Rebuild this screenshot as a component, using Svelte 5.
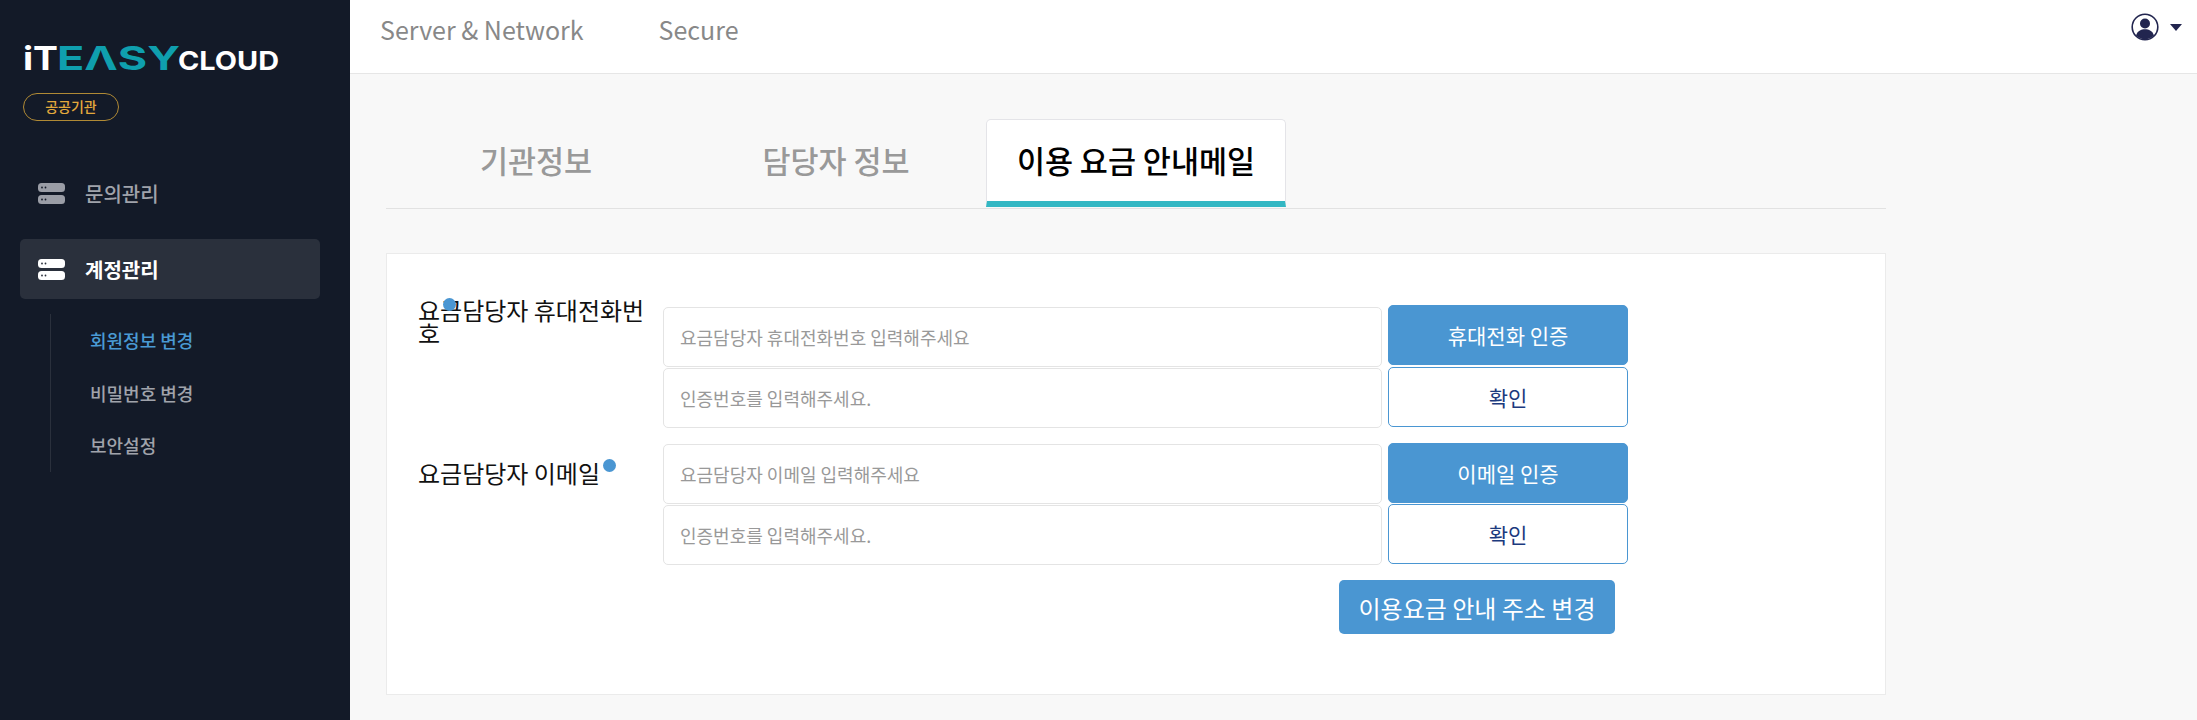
<script>
  const subMenu = [
    { label: "회원정보 변경", active: true },
    { label: "비밀번호 변경", active: false },
    { label: "보안설정", active: false },
  ];
  const tabs = [
    { label: "기관정보", active: false },
    { label: "담당자 정보", active: false },
    { label: "이용 요금 안내메일", active: true },
  ];
</script>

{#snippet serverIcon(fill, dot)}
  <svg class="menu-icon" width="27" height="21" viewBox="0 0 27 21">
    <rect x="0" y="0" width="27" height="9" rx="3.5" fill={fill} />
    <rect x="0" y="12" width="27" height="9" rx="3.5" fill={fill} />
    <circle cx="4" cy="4.5" r="0.9" fill={dot} />
    <circle cx="7.5" cy="4.5" r="0.9" fill={dot} />
    <circle cx="4" cy="16.5" r="0.9" fill={dot} />
    <circle cx="7.5" cy="16.5" r="0.9" fill={dot} />
  </svg>
{/snippet}

<div class="layout">
  <aside class="sidebar">
    <svg class="logo" width="258" height="42" viewBox="0 0 258 42">
      <text class="logo-big" x="0" y="33" fill="#fff" textLength="35" lengthAdjust="spacingAndGlyphs">iT</text>
      <text class="logo-big" x="34" y="33" fill="#0f9fae" textLength="123" lengthAdjust="spacingAndGlyphs">EΛSY</text>
      <text class="logo-small" x="155" y="33" fill="#fff" textLength="101" lengthAdjust="spacingAndGlyphs">CLOUD</text>
    </svg>
    <div class="badge">공공기관</div>

    <nav class="menu">
      <a class="menu-item" href="#inquiry">
        {@render serverIcon("#9a9da6", "#131a28")}
        <span>문의관리</span>
      </a>
      <a class="menu-item current" href="#account">
        {@render serverIcon("#ffffff", "#2a303c")}
        <span>계정관리</span>
      </a>
      <div class="submenu">
        {#each subMenu as item}
          <a class="sub-link" class:active={item.active} href="#sub">{item.label}</a>
        {/each}
      </div>
    </nav>
  </aside>

  <div class="content">
    <header class="topbar">
      <a class="top-link" href="#server">Server &amp; Network</a>
      <a class="top-link" href="#secure">Secure</a>
      <div class="user">
        <svg width="28" height="28" viewBox="0 0 28 28">
          <circle cx="14" cy="14" r="12.8" fill="#fff" stroke="#22254f" stroke-width="1.6" />
          <circle cx="14" cy="10.5" r="5" fill="#22254f" />
          <path d="M5 22.5c1.5-4.5 5-6.2 9-6.2s7.5 1.7 9 6.2a12.8 12.8 0 0 1-18 0z" fill="#22254f" />
        </svg>
        <span class="caret"></span>
      </div>
    </header>

    <main class="main">
      <div class="tabs">
        {#each tabs as tab}
          <button class="tab" class:active={tab.active}>{tab.label}</button>
        {/each}
      </div>

      <section class="card">
        <div class="row phone">
          <div class="label-col"><label class="label" for="phone">요금담당자 휴대전화번호</label></div>
          <div class="fields">
            <div class="line">
              <input id="phone" placeholder="요금담당자 휴대전화번호 입력해주세요" />
              <button class="btn solid">휴대전화 인증</button>
            </div>
            <div class="line">
              <input placeholder="인증번호를 입력해주세요." />
              <button class="btn outline">확인</button>
            </div>
          </div>
        </div>

        <div class="row email">
          <div class="label-col"><label class="label" for="email">요금담당자 이메일</label></div>
          <div class="fields">
            <div class="line">
              <input id="email" placeholder="요금담당자 이메일 입력해주세요" />
              <button class="btn solid">이메일 인증</button>
            </div>
            <div class="line">
              <input placeholder="인증번호를 입력해주세요." />
              <button class="btn outline">확인</button>
            </div>
          </div>
        </div>

        <div class="actions">
          <button class="btn-change">이용요금 안내 주소 변경</button>
        </div>
      </section>
    </main>
  </div>
</div>

<style>
  :global(body) {
    background: #f8f8f8;
    font-family: "Noto Sans CJK KR", "Noto Sans", sans-serif;
  }

  a {
    text-decoration: none;
  }

  button,
  input {
    font-family: inherit;
  }

  .layout {
    display: flex;
    min-height: 720px;
  }

  .sidebar {
    box-sizing: border-box;
    flex: 0 0 350px;
    background: #131a28;
    padding: 37px 30px 0 23px;
  }

  .logo {
    display: block;
  }

  .logo-big {
    font-family: Inter, sans-serif;
    font-size: 33px;
    font-weight: 700;
  }

  .logo-small {
    font-family: Inter, sans-serif;
    font-size: 26px;
    font-weight: 700;
  }

  .badge {
    box-sizing: border-box;
    width: 96px;
    height: 28px;
    margin-top: 14px;
    border: 1px solid #b08a35;
    border-radius: 14px;
    color: #e3a93c;
    font-size: 14px;
    font-weight: 500;
    line-height: 25px;
    text-align: center;
  }

  .menu {
    margin: 42px 0 0 -3px;
  }

  .menu-item {
    display: flex;
    align-items: center;
    gap: 20px;
    height: 60px;
    padding-left: 18px;
    border-radius: 5px;
    color: #a0a3ab;
    font-size: 20px;
    font-weight: 500;
  }

  .menu-item.current {
    margin-top: 16px;
    background: #2a303c;
    color: #fff;
    font-weight: 700;
  }

  .submenu {
    display: flex;
    flex-direction: column;
    gap: 24.5px;
    margin: 15px 0 0 30px;
    padding: 12px 0 13px 39px;
    border-left: 1px solid #2a303c;
  }

  .sub-link {
    color: #a0a3ab;
    font-size: 18px;
    font-weight: 500;
    line-height: 28px;
  }

  .sub-link.active {
    color: #4a9ad4;
  }

  .content {
    flex: 1;
    min-width: 0;
  }

  .topbar {
    box-sizing: border-box;
    display: flex;
    align-items: flex-start;
    gap: 75px;
    height: 74px;
    padding: 11px 0 0 30px;
    background: #fff;
    border-bottom: 1px solid #e6e6e6;
  }

  .top-link {
    color: #888;
    font-size: 25px;
    line-height: 36px;
  }

  .user {
    display: flex;
    align-items: center;
    gap: 11px;
    margin-left: auto;
    margin-right: 15px;
    margin-top: 2px;
  }

  .caret {
    width: 0;
    height: 0;
    border-left: 6px solid transparent;
    border-right: 6px solid transparent;
    border-top: 7px solid #22254f;
  }

  .main {
    box-sizing: border-box;
    width: 1536px;
    padding: 45px 0 0 36px;
  }

  .tabs {
    display: flex;
    height: 89px;
    border-bottom: 1px solid #e2e2e2;
  }

  .tab {
    box-sizing: border-box;
    width: 300px;
    height: 88px;
    padding: 0 0 8px;
    background: none;
    border: 1px solid transparent;
    border-bottom: 0;
    color: #999;
    font-size: 30.5px;
    font-weight: 500;
  }

  .tab.active {
    background: #fff;
    border-color: #e4e4e8;
    border-bottom: 6px solid #33b7c3;
    border-radius: 5px 5px 0 0;
    padding-bottom: 2px;
    color: #000;
  }

  .card {
    box-sizing: border-box;
    height: 442px;
    margin-top: 44px;
    padding: 51px 0 0 31px;
    background: #fff;
    border: 1px solid #ebebeb;
  }

  .row {
    display: flex;
    width: 1210px;
  }

  .row.email {
    margin-top: 15px;
  }

  .label-col {
    flex: 0 0 245px;
  }

  .label {
    position: relative;
    display: block;
    width: 240px;
    color: #111;
    font-size: 24px;
    line-height: 23px;
  }

  .label::after {
    content: "";
    position: absolute;
    top: 0;
    width: 13px;
    height: 13px;
    margin-left: 3px;
    border-radius: 50%;
    background: #4a96d2;
  }

  .phone .label {
    margin-top: -7px;
  }

  .email .label {
    margin-top: 18px;
  }

  .email .label::after {
    top: -2px;
  }

  .fields {
    flex: 1;
  }

  .line {
    display: flex;
    align-items: flex-start;
    gap: 6px;
    height: 61px;
  }

  .phone .line:first-child {
    height: 62px;
  }

  input {
    box-sizing: border-box;
    width: 719px;
    height: 60px;
    margin-top: 1px;
    padding: 0 16px;
    background: #fff;
    border: 1px solid #e4e4e4;
    border-radius: 5px;
    font-size: 18px;
  }

  .phone .line:first-child input {
    margin-top: 2px;
  }

  input::placeholder {
    color: #999;
    opacity: 1;
  }

  .btn {
    box-sizing: border-box;
    flex: 0 0 240px;
    height: 60px;
    border-radius: 5px;
    font-size: 21px;
  }

  .solid {
    background: #4a96d2;
    border: 1px solid #4a96d2;
    color: #fff;
  }

  .outline {
    background: #fff;
    border: 1px solid #4a96d2;
    color: #1c3a7e;
  }

  .actions {
    display: flex;
    justify-content: flex-end;
    width: 1197px;
    margin-top: 15px;
  }

  .btn-change {
    width: 276px;
    height: 54px;
    background: #4a96d2;
    border: 0;
    border-radius: 5px;
    color: #fff;
    font-size: 24px;
  }
</style>
